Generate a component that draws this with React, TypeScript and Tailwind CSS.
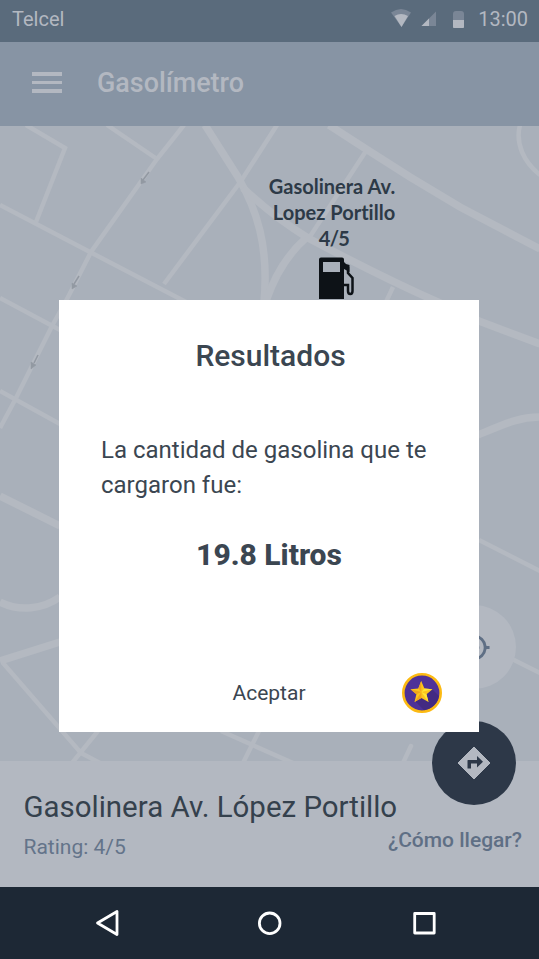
import React from "react";
import { MdGpsFixed } from "react-icons/md";

function StatusBar() {
  return (
    <header className="flex h-[42px] shrink-0 items-center bg-[#5a6b7c] pr-[11px] pb-[4px] pl-3 text-[20px] text-[#b3b8c1]">
      <span className="flex-1">Telcel</span>
      <svg width="68" height="20" viewBox="391 10 68 20" className="mr-[20px]">
        <path d="M391 13.5Q401 6.500 411 13.500L401.500 28Z" fill="#7a8696" />
        <path d="M394.500 17Q401 13 408 17L401.500 28Z" fill="#b3b8c1" />
        <path d="M421.500 27L436 12.500V27Z" fill="#7a8696" />
        <path d="M421.500 27L429 19.500V27Z" fill="#b3b8c1" />
      </svg>
      <span className="-ml-[26px] mt-[1px] mr-[14px] flex h-[17px] w-[11px] flex-col justify-end overflow-hidden rounded-t-[3px] rounded-b-[1px] bg-[#7a8696]">
        <i className="block h-2 bg-[#b3b8c1]" />
      </span>
      <span>13:00</span>
    </header>
  );
}

function AppBar() {
  return (
    <div className="flex h-[84px] shrink-0 items-center bg-[#8794a4] pl-8 text-[#b3b8c1]">
      <div className="mb-[3px] flex w-[30px] flex-col gap-[5px]">
        <i className="h-[3.500px] bg-[#b3b8c1]" />
        <i className="h-[3.500px] bg-[#b3b8c1]" />
        <i className="h-[3.500px] bg-[#b3b8c1]" />
      </div>
      <h1 className="ml-[35px] pb-[2px] text-[26.900px] font-medium">Gasolímetro</h1>
    </div>
  );
}

function Streets() {
  return (
    <svg className="absolute inset-0" width="539" height="635" viewBox="0 126 539 635" fill="none">
      <g stroke="#b4b9c1" strokeWidth="4.500">
        <path d="M26 125L65 148L36 222" />
        <path d="M0 205L90 252L186 302" />
        <path d="M107 125L157 159" />
        <path d="M184 125L157 159L91 252L66 301L52 326L15 400L0 428" />
        <path d="M277 125L241 181L164 284" />
        <path d="M366 151L309 238M393 287L386 302" />
        <path d="M520 125C515 144 524 162 540 175" />
        <path d="M0 298L60 330M0 391L60 424" />
        <path d="M3 663L81 753L100 763M98 731L72 763" />
        <path d="M479 540L540 571M512 659L540 673" />
        <path d="M221 731L293 763M259 731L243 763" />
        <path d="M411 746L403 763" strokeLinecap="round" />
      </g>
      <g stroke="#b4b9c1" strokeWidth="7.500">
        <path d="M205 125L238 177C257 210 269 246 264 302" />
        <path d="M243 188C262 206 282 222 308 238C340 255 390 281 440 303L479 321L540 344" />
        <path d="M329 125L366 149L410 177L460 207L540 249" />
        <path d="M306 238C290 252 276 272 266 301" />
        <path d="M0 496L60 526M0 602C20 612 43 609 60 597M0 661L60 642" />
        <path d="M478 435C507 423 520 417 540 417" />
      </g>
      <g stroke="#9299a2" strokeWidth="1.500" fill="#9299a2">
        <path d="M149 172L143 180" />
        <path d="M141 184L141 178L146 182Z" strokeWidth=".5" />
        <path d="M79 276L74 284" />
        <path d="M72 289L72 283L77 286Z" strokeWidth=".5" />
        <path d="M38 355L34 363" />
        <path d="M31 369L31 362L36 365Z" strokeWidth=".5" />
      </g>
    </svg>
  );
}

function StationPin() {
  return (
    <div className="absolute top-[47px] left-[260px] flex w-[144px] flex-col items-center">
      <p className="flex flex-col text-center font-[Lato,sans-serif] text-[20px] leading-[26px] font-bold whitespace-nowrap text-[#2d3a47] [font-variant-ligatures:none]">
        <span>Gasolinera Av.</span>
        <span className="pl-[4px]">Lopez Portillo</span>
        <span className="pl-[4px] tracking-[-0.6px]">4/5</span>
      </p>
      <svg width="36" height="42" viewBox="0 0 36 42" className="mt-[6px] ml-[9px]">
        <path
          fillRule="evenodd"
          d="M2 .5H23Q25 .5 25 2.500V42H0V2.500Q0 .5 2 .5ZM4 5V15H21V5Z"
          fill="#0d1217"
        />
        <path
          d="M29 10V16L33.500 21V34Q33.500 37 31.300 37Q29 37 29 34V28H25"
          fill="none"
          stroke="#0d1217"
          strokeWidth="2.500"
        />
        <path d="M25 5L27 7L30.500 8V15L25 12Z" fill="#0d1217" />
      </svg>
    </div>
  );
}

function StarBadge() {
  return (
    <svg width="40" height="40" viewBox="0 0 40 40">
      <circle cx="20" cy="20" r="18.700" fill="#4e3198" stroke="#fcba12" strokeWidth="2.600" />
      <path d="M30 16L37 23A17.400 17.400 0 0 1 22 37.200L13 28Z" fill="#432a82" />
      <path d="M19.200 8L22.400 15.500L30.500 16.300L24.500 21.300L26.500 29L19.400 25L12.500 29L14.400 21.200L8.500 16.300L16.300 15.500Z" fill="#fdc51b" />
      <path d="M19.200 8L19.400 19L16.300 15.500ZM8.500 16.300L19.400 19L14.400 21.200ZM12.500 29L19.400 19V25Z" fill="#f0a51c" />
      <path d="M22.400 15.500L30.500 16.300L19.400 19ZM24.500 21.300L26.500 29L19.400 19Z" fill="#ffe536" />
    </svg>
  );
}

function ResultDialog() {
  return (
    <section
      role="dialog"
      className="absolute top-[300px] left-[59px] flex h-[432px] w-[420px] flex-col bg-white text-[#3b4651]"
    >
      <h2 className="mt-[37px] pl-[3px] text-center text-[30px] leading-[38px] font-medium">Resultados</h2>
      <p className="mt-[58px] ml-[42px] text-[24px] leading-[35px] whitespace-nowrap">
        La cantidad de gasolina que te
        <br />
        cargaron fue:
      </p>
      <strong className="mt-[33px] text-center text-[30px] leading-[38px] font-extrabold">19.8 Litros</strong>
      <footer className="relative mt-auto mb-[19px] flex h-10 items-center justify-center">
        <button className="pt-[2px] text-[21px]">Aceptar</button>
        <span className="absolute top-0 right-[37px]">
          <StarBadge />
        </span>
      </footer>
    </section>
  );
}

function StationCard() {
  return (
    <section className="flex h-[126px] shrink-0 justify-between bg-[#b3b8c1] pr-[17px] pl-[23.500px]">
      <div className="w-0 whitespace-nowrap">
        <h2 className="mt-[27px] text-[29.450px] leading-[38px] text-[#35414d]">Gasolinera Av. López Portillo</h2>
        <p className="mt-[8px] text-[21px] leading-[26px] text-[#64748a]">Rating: 4/5</p>
      </div>
      <p className="mt-[66px] text-[21px] leading-[26px] font-medium text-[#5f6f85]">¿Cómo llegar?</p>
    </section>
  );
}

function NavBar() {
  return (
    <nav className="flex h-[72px] shrink-0 items-center bg-[#1d2835]">
      <svg width="539" height="72" viewBox="0 887 539 72" fill="none" stroke="#fff" strokeWidth="2.800" strokeLinejoin="round">
        <path d="M117 911.500V934.500L97.500 923Z" />
        <circle cx="269.700" cy="923.300" r="10.300" />
        <rect x="414.700" y="913.500" width="19.500" height="19.500" />
      </svg>
    </nav>
  );
}

export default function App() {
  return (
    <main className="relative flex h-[959px] w-[539px] flex-col overflow-hidden bg-[#a9b0ba] font-[Roboto,sans-serif]">
      <StatusBar />
      <AppBar />
      <section className="relative h-[635px] shrink-0">
        <Streets />
        <StationPin />
        <div className="absolute top-[479px] left-[431.500px] flex size-[84px] items-center justify-center rounded-full bg-[#b3b8c1] text-[#5f6f85]">
          <MdGpsFixed size={35} />
        </div>
      </section>
      <StationCard />
      <NavBar />
      <button className="absolute top-[721px] left-[431.500px] flex size-[84px] items-center justify-center rounded-full bg-[#2d3848] text-[#b3b8c1]">
        <svg width="34" height="34" viewBox="0 0 34 34">
          <path d="M17 1L33 17L17 33L1 17Z" fill="#b3b8c1" stroke="#b3b8c1" strokeWidth="1" strokeLinejoin="round" />
          <path d="M10.500 22.500V14.500Q10.500 14 11 14H20V10L26 15.800L20 21.500V17.500H14V22.500Z" fill="#2d3848" />
        </svg>
      </button>
      <ResultDialog />
    </main>
  );
}
